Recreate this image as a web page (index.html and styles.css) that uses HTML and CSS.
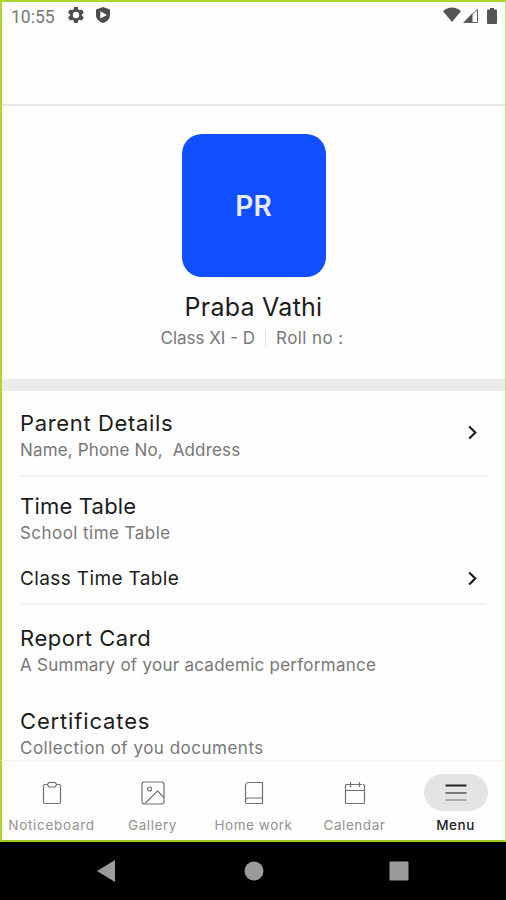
FILE: index.html
```html
<!DOCTYPE html>
<html lang="en">
<head>
    <meta charset="UTF-8">
    <meta name="viewport" content="width=device-width, initial-scale=1.0">
    <title>Menu</title>
    <link rel="stylesheet" href="styles.css">
</head>
<body>
    <div class="screen">
        <div class="status-bar">
            <span class="time">10:55</span>
            <svg class="gear" width="16" height="16" viewBox="2 2 20 20">
                <path fill="#4d4d4d" fill-rule="evenodd" d="M19.400 13a7.500 7.500 0 0 0 0-2l2.100-1.600a.5.5 0 0 0 .1-.6l-2-3.500a.5.5 0 0 0-.6-.2l-2.500 1a7.500 7.500 0 0 0-1.700-1l-.4-2.600a.5.5 0 0 0-.5-.5h-4a.5.5 0 0 0-.5.500L9 5.100a7.500 7.500 0 0 0-1.700 1l-2.500-1a.5.5 0 0 0-.6.200l-2 3.500a.5.5 0 0 0 .1.600L4.500 11a7.500 7.500 0 0 0 0 2l-2.200 1.600a.5.5 0 0 0-.1.600l2 3.500c.1.200.4.300.6.200l2.500-1a7.500 7.500 0 0 0 1.700 1l.4 2.600c0 .3.200.5.500.5h4c.3 0 .5-.2.500-.5l.4-2.600a7.500 7.500 0 0 0 1.700-1l2.500 1c.2.100.5 0 .6-.2l2-3.500a.5.5 0 0 0-.1-.6zM12 16a4 4 0 1 1 0-8 4 4 0 0 1 0 8z"/>
            </svg>
            <svg class="shield" width="14" height="16" viewBox="0 0 14 16">
                <path fill="#4d4d4d" fill-rule="evenodd" d="M7 0l7 2.500v5.500c0 3.800-3 6.800-7 8-4-1.200-7-4.200-7-8V2.500zM4.300 4.200v7.400L11 7.900z"/>
            </svg>
            <div class="status-right">
                <svg width="18" height="15" viewBox="0 0 18 15">
                    <path fill="#555" d="M9 15L0 4.200C5-.8 13-.8 18 4.200z"/>
                </svg>
                <svg class="signal" width="15" height="16" viewBox="0 0 15 16">
                    <path fill="#555" d="M0 16L9.500 6v10z"/>
                    <path fill="none" stroke="#666" d="M1.500 15.500h13V2.200L9 7.500"/>
                </svg>
                <svg class="battery" width="10" height="16" viewBox="0 0 10 16">
                    <path fill="#555" d="M3 0h4v1.500h2q1 0 1 1V15q0 1-1 1H1q-1 0-1-1V2.500q0-1 1-1h2z"/>
                </svg>
            </div>
        </div>

        <div class="profile">
            <div class="avatar">PR</div>
            <div class="name">Praba Vathi</div>
            <div class="class-info">
                <span>Class XI - D</span>
                <span class="roll">Roll no :</span>
            </div>
        </div>

        <div class="list">
            <div class="item parent">
                <div>
                    <div class="title">Parent Details</div>
                    <div class="sub">Name, Phone No,&nbsp; Address</div>
                </div>
                <svg width="9" height="15" viewBox="0 0 9 15"><path class="chevron" d="M1.200 1.500L7.300 7.500l-6.100 6"/></svg>
            </div>
            <div class="item timetable">
                <div>
                    <div class="title">Time Table</div>
                    <div class="sub">School time Table</div>
                </div>
            </div>
            <div class="item link">
                <div class="link-text">Class Time Table</div>
                <svg width="9" height="15" viewBox="0 0 9 15"><path class="chevron" d="M1.200 1.500L7.300 7.500l-6.100 6"/></svg>
            </div>
            <div class="item report">
                <div>
                    <div class="title">Report Card</div>
                    <div class="sub">A Summary of your academic performance</div>
                </div>
            </div>
            <div class="item certificates">
                <div>
                    <div class="title">Certificates</div>
                    <div class="sub">Collection of you documents</div>
                </div>
            </div>
        </div>

        <div class="tabs">
            <div class="tab">
                <div class="icon">
                    <svg width="24" height="24" viewBox="0 0 24 24">
                        <path d="M8 3.500H5A1.500 1.500 0 0 0 3.500 5v16A1.500 1.500 0 0 0 5 22.500h14a1.500 1.500 0 0 0 1.500-1.500V5A1.500 1.500 0 0 0 19 3.500h-3"/>
                        <path d="M9 1.500h6l1.800 2-1.800 2.500H9L7.200 3.500z"/>
                    </svg>
                </div>
                <span class="wide">Noticeboard</span>
            </div>
            <div class="tab">
                <div class="icon">
                    <svg width="24" height="24" viewBox="0 0 24 24">
                        <rect x="1" y="1" width="22" height="22" rx="2.500"/>
                        <circle cx="8.500" cy="8" r="2"/>
                        <path d="M4 22.500L16.500 10l6.500 6.500"/>
                    </svg>
                </div>
                <span>Gallery</span>
            </div>
            <div class="tab">
                <div class="icon">
                    <svg width="24" height="24" viewBox="0 0 24 24">
                        <path d="M20.500 17V1.500h-14a3 3 0 0 0-3 3v15.500M20.500 17v5.500H5.500a2 2 0 0 1-2-2.500q0-3 3-3z"/>
                    </svg>
                </div>
                <span>Home work</span>
            </div>
            <div class="tab">
                <div class="icon">
                    <svg width="24" height="24" viewBox="0 0 24 24">
                        <path d="M5 3.500H3.500a1 1 0 0 0-1 1v17a1 1 0 0 0 1 1h17a1 1 0 0 0 1-1v-17a1 1 0 0 0-1-1H20M9 3.500h6M2.500 9.500h19M7.500 1v5M16.500 1v5M5 3.500h14"/>
                    </svg>
                </div>
                <span>Calendar</span>
            </div>
            <div class="tab active">
                <div class="icon">
                    <svg width="22" height="20" viewBox="0 0 22 20">
                        <path class="bar-top" d="M.5 2.500h21"/>
                        <path class="bar-mid" d="M.5 10h21"/>
                        <path class="bar-low" d="M.5 17h21"/>
                    </svg>
                </div>
                <span>Menu</span>
            </div>
        </div>
    </div>

    <div class="system-nav">
        <svg width="18" height="22" viewBox="0 0 18 22"><path d="M18 0v22L0 11z"/></svg>
        <svg class="home" width="20" height="20" viewBox="0 0 20 20"><circle cx="10" cy="10" r="9.500"/></svg>
        <svg width="20" height="20" viewBox="0 0 20 20"><rect x=".5" y=".5" width="19" height="19" rx="1"/></svg>
    </div>
</body>
</html>
```
FILE: styles.css
```css
* {
    box-sizing: border-box;
}
body {
    margin: 0;
    width: 506px;
    height: 900px;
    background: #000;
    color: #1c1c1c;
    font-family: Inter, "Liberation Sans", sans-serif;
    overflow: hidden;
    white-space: nowrap;
}
svg {
    display: block;
    flex: none;
}
.screen {
    display: flex;
    flex-direction: column;
    height: 842px;
    background: #fefefe;
    border: 2px solid #aed62e;
    border-right: 1px solid #c3e464;
    border-bottom-color: #a4c823;
}
.status-bar {
    display: flex;
    align-items: flex-start;
    flex: none;
    height: 104px;
    padding: 5px 8px 0 9px;
    border-bottom: 2px solid #e6e6e6;
}
.time {
    width: 57px;
    font-family: Roboto, sans-serif;
    font-size: 17.5px;
    line-height: 20px;
    color: #777;
}
.shield {
    margin-left: 12px;
}
.status-right {
    display: flex;
    margin-left: auto;
}
.signal {
    margin-left: 2px;
}
.battery {
    margin-top: 1px;
    margin-left: 9px;
}
.profile {
    display: flex;
    flex-direction: column;
    align-items: center;
    flex: none;
    height: 285px;
    padding-top: 28px;
    border-bottom: 12px solid #ececec;
}
.avatar {
    width: 144px;
    height: 143px;
    border-radius: 20px;
    background: #104eff;
    color: #e8ebff;
    font-size: 28px;
    font-weight: 600;
    line-height: 144px;
    text-align: center;
}
.name {
    margin-top: 15px;
    font-size: 25px;
    line-height: 30px;
    letter-spacing: 0.25px;
}
.class-info {
    display: flex;
    align-items: center;
    margin-top: 4px;
    padding-right: 3px;
    font-size: 17px;
    line-height: 24px;
    color: #777;
}
.roll {
    margin-left: 10px;
    padding-left: 10px;
    border-left: 1px solid #e3e3e3;
    line-height: 16px;
    letter-spacing: 0.4px;
}
.list {
    flex: 1;
    min-height: 0;
    overflow: hidden;
    padding: 0 18px;
}
.item {
    display: flex;
    justify-content: space-between;
    align-items: flex-start;
}
.title {
    font-size: 22px;
    line-height: 26px;
    letter-spacing: 0.65px;
}
.sub {
    font-size: 17px;
    line-height: 28px;
    letter-spacing: 0.45px;
    color: #777;
}
.chevron {
    fill: none;
    stroke: #1c1c1c;
    stroke-width: 2.2;
}
.item svg {
    margin-right: 10px;
}
.parent {
    height: 86px;
    padding-top: 19px;
    border-bottom: 2px solid #f2f2f2;
}
.parent .sub {
    letter-spacing: 0.15px;
}
.parent svg {
    margin-top: 15px;
}
.timetable {
    padding-top: 16px;
}
.timetable .title {
    letter-spacing: 0.2px;
}
.link {
    height: 58px;
    padding-top: 19px;
    border-bottom: 2px solid #f0f0f0;
}
.link svg {
    margin-top: 5px;
}
.link-text {
    font-size: 19px;
    line-height: 26px;
    letter-spacing: 0.37px;
}
.report {
    padding-top: 20px;
}
.report .title {
    letter-spacing: 0.55px;
}
.report .sub {
    letter-spacing: 0.26px;
}
.certificates {
    padding-top: 29px;
}
.certificates .title {
    letter-spacing: 0.85px;
}
.certificates .sub {
    letter-spacing: 0.5px;
}
.tabs {
    display: flex;
    flex: none;
    height: 80px;
    margin-left: -1px;
    border-top: 1px solid #f3f3f3;
}
.tab {
    display: flex;
    flex-direction: column;
    align-items: center;
    flex: none;
    width: 101px;
    padding-top: 13px;
    font-size: 13.5px;
    line-height: 18px;
    letter-spacing: 0.55px;
    color: #929292;
}
.wide {
    letter-spacing: 0.7px;
}
.icon {
    display: flex;
    align-items: center;
    justify-content: center;
    width: 64px;
    height: 37px;
    margin-bottom: 5px;
    border-radius: 19px;
}
.icon svg {
    fill: none;
    stroke: #707070;
    stroke-width: 1.2;
}
.active {
    color: #1c1c1c;
    font-weight: 500;
}
.active .icon {
    background: #e4e4e4;
}
.icon .bar-top {
    stroke: #222;
    stroke-width: 2;
}
.icon .bar-mid {
    stroke: #777;
    stroke-width: 2;
}
.icon .bar-low {
    stroke: #999;
    stroke-width: 1.5;
}
.system-nav {
    display: flex;
    justify-content: space-between;
    align-items: center;
    height: 58px;
    padding: 0 97px;
}
.system-nav svg {
    fill: #9b9b9b;
}
.system-nav .home {
    margin-left: 3px;
}
```
